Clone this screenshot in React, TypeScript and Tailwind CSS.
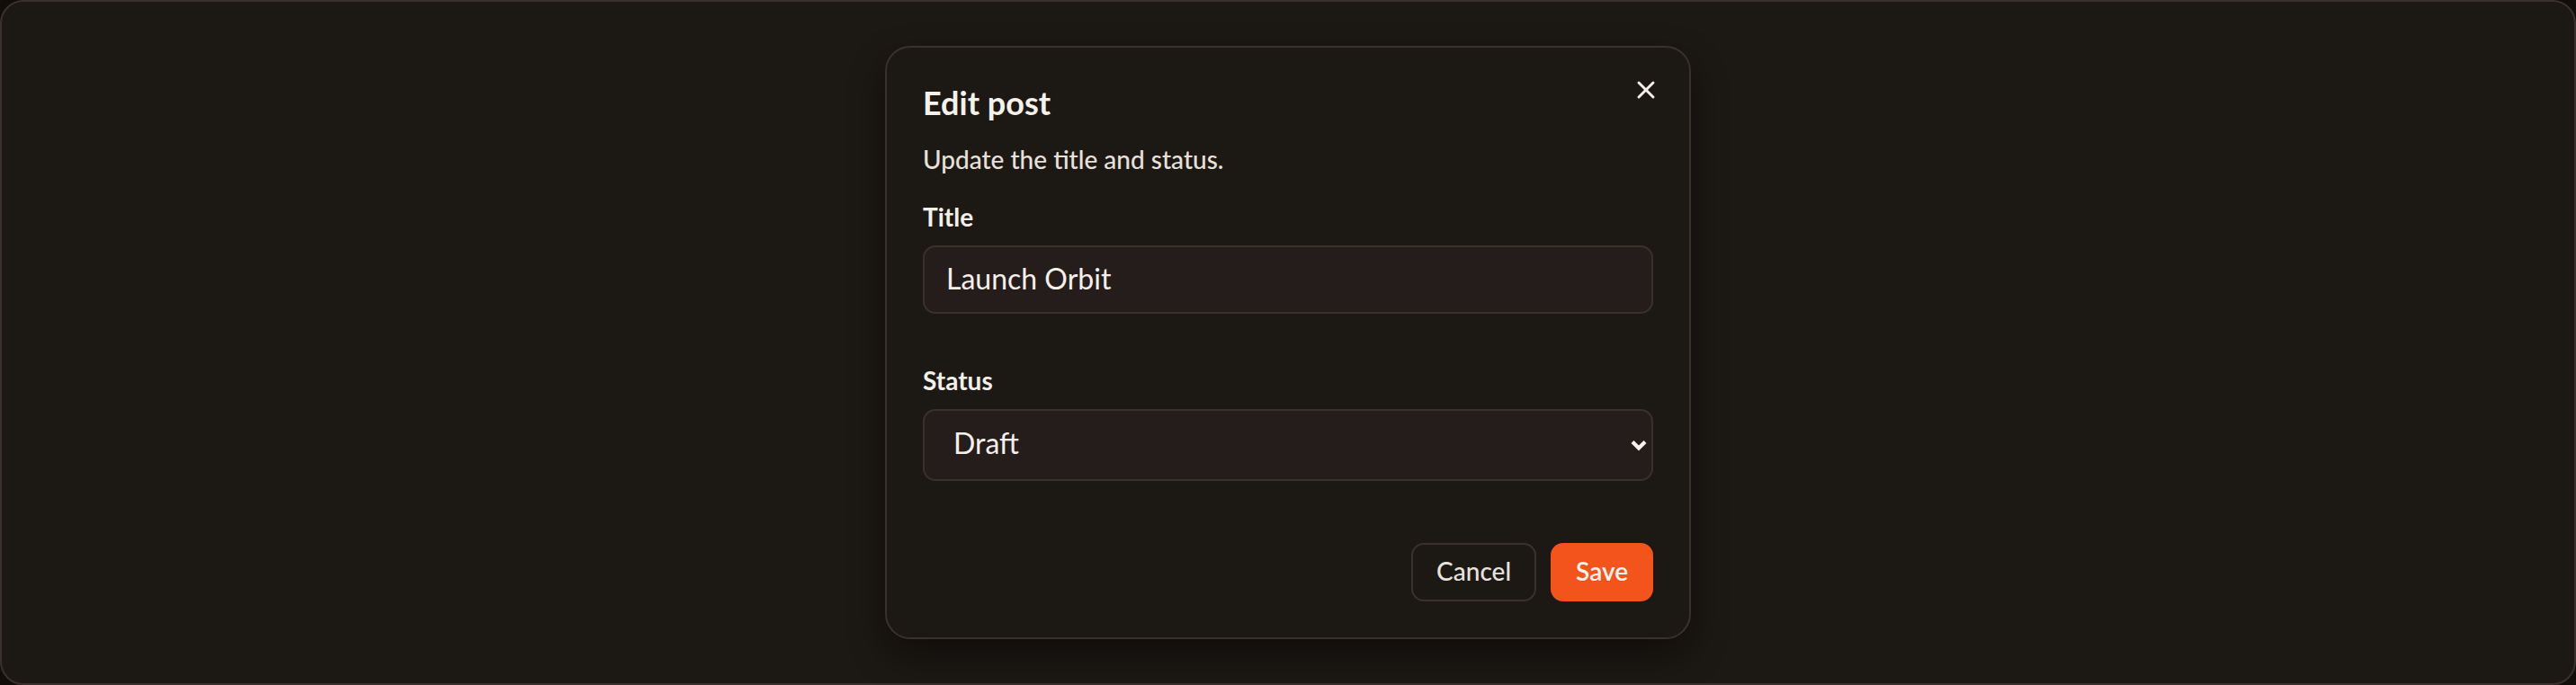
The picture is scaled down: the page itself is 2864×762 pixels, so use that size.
import { X } from 'lucide-react'

export default function App() {
  return (
    <div className="h-screen w-full bg-[#110d0b] font-['Lato',sans-serif]">
      <div className="flex h-full items-center justify-center rounded-[26px] border-2 border-[#3a302c] bg-[#1c1814]">
        <div className="relative w-[896px] rounded-[28px] border-2 border-[#3a312d] bg-[#1c1814] p-10 shadow-[0_18px_40px_rgba(0,0,0,0.45)]">
          <button className="absolute right-8 top-[31px] text-[#f5efe9]" aria-label="Close">
            <X size={32} strokeWidth={2.2} />
          </button>

          <h2 className="text-[36px] font-bold leading-[42px] text-[#f7f1ec]">Edit post</h2>
          <p className="mt-[22px] text-[28px] font-medium leading-[40px] text-[#e8e0d9]">
            Update the title and status.
          </p>

          <label className="mt-6 block text-[28px] font-bold leading-[40px] text-[#f5efe9]">
            Title
          </label>
          <input
            defaultValue="Launch Orbit"
            className="mt-3 block h-[76px] w-full rounded-[14px] border-2 border-[#3a312d] bg-[#251d1b] px-6 pb-1 text-[32px] text-[#f5efe9] outline-none"
          />

          <label className="mt-[54px] block text-[28px] font-bold leading-[40px] text-[#f5efe9]">
            Status
          </label>
          <div className="relative mt-3">
            <select
              defaultValue="draft"
              className="block h-[80px] w-full appearance-none rounded-[14px] border-2 border-[#3a312d] bg-[#251d1b] pl-8 pb-1 text-[32px] text-[#f5efe9] outline-none"
            >
              <option value="draft">Draft</option>
              <option value="published">Published</option>
            </select>
            <svg
              className="pointer-events-none absolute right-[2px] top-1/2 -translate-y-1/2 text-[#f7f1ec]"
              width="28"
              height="28"
              viewBox="0 0 24 24"
              fill="none"
              stroke="currentColor"
              strokeWidth="3.6"
            >
              <path d="m6 9 6 6 6-6" />
            </svg>
          </div>

          <div className="mt-[69px] flex justify-end gap-4">
            <button className="h-[65px] rounded-[14px] border-2 border-[#3a312d] px-[26px] pb-[3px] text-[28px] font-medium text-[#e9e2dc]">
              Cancel
            </button>
            <button className="h-[65px] rounded-[14px] bg-[#f2541c] px-7 pb-[3px] text-[28px] font-semibold text-[#fff4ee]">
              Save
            </button>
          </div>
        </div>
      </div>
    </div>
  )
}
